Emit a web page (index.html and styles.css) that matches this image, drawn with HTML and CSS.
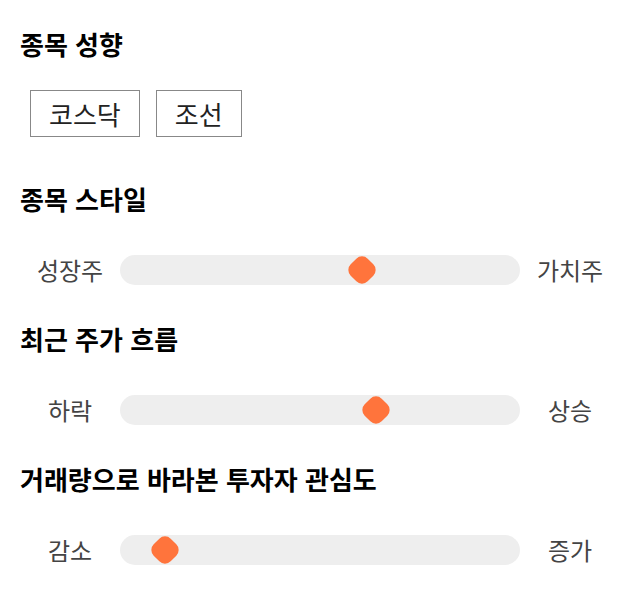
FILE: index.html
```html
<!DOCTYPE html>
<html lang="ko">
<head>
<meta charset="utf-8">
<link rel="stylesheet" href="styles.css">
</head>
<body>
<div class="page">
  <section class="section first">
    <h2 class="title">종목 성향</h2>
    <div class="chips">
      <button class="chip">코스닥</button>
      <button class="chip">조선</button>
    </div>
  </section>
  <section class="section">
    <h2 class="title">종목 스타일</h2>
    <div class="slider-row">
      <span class="label">성장주</span>
      <div class="track"><span class="thumb" style="left: 60.5%"></span></div>
      <span class="label">가치주</span>
    </div>
  </section>
  <section class="section">
    <h2 class="title">최근 주가 흐름</h2>
    <div class="slider-row">
      <span class="label">하락</span>
      <div class="track"><span class="thumb" style="left: 63.9%"></span></div>
      <span class="label">상승</span>
    </div>
  </section>
  <section class="section">
    <h2 class="title">거래량으로 바라본 투자자 관심도</h2>
    <div class="slider-row">
      <span class="label">감소</span>
      <div class="track"><span class="thumb" style="left: 11.25%"></span></div>
      <span class="label">증가</span>
    </div>
  </section>
</div>
</body>
</html>
```
FILE: styles.css
```css
* { box-sizing: border-box; }
html, body { margin: 0; padding: 0; background: #fff; }
body {
  font-family: "Noto Sans CJK KR", "Noto Sans", sans-serif;
  color: #111;
}
.page {
  width: 640px;
  padding: 29px 20px 0;
}
.section { margin-top: 39px; }
.section.first { margin-top: 0; padding-bottom: 8px; }
.title {
  margin: 0;
  font-size: 26px;
  line-height: 30px;
  font-weight: 700;
  color: #000;
}
.chips {
  display: flex;
  gap: 16px;
  margin-top: 31px;
  padding-left: 10px;
}
.chip {
  height: 47px;
  padding: 0 18px;
  border: 1px solid #888;
  background: #fff;
  font-family: inherit;
  font-size: 26px;
  line-height: 30px;
  color: #222;
  border-radius: 0;
}
.slider-row {
  display: grid;
  grid-template-columns: 100px 1fr 100px;
  align-items: center;
  margin-top: 41px;
  height: 30px;
}
.label {
  text-align: center;
  font-size: 24px;
  line-height: 30px;
  height: 30px;
  color: #444;
}
.track {
  position: relative;
  height: 30px;
  background: #eeeeee;
  border-radius: 15px;
}
.thumb {
  position: absolute;
  top: 50%;
  width: 24px;
  height: 24px;
  margin: -12px 0 0 -12px;
  background: #ff743c;
  border-radius: 8px;
  transform: rotate(45deg);
}
```
